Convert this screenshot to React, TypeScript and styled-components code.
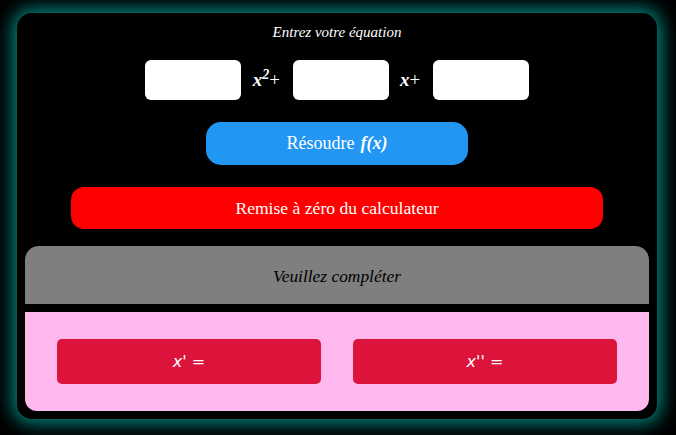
import React from "react";
import styled, { createGlobalStyle } from "styled-components";

const Global = createGlobalStyle`
  html, body { margin: 0; padding: 0; background: #000; }
  body { font-family: "Liberation Serif", "Times New Roman", serif; }
  * { box-sizing: border-box; }
`;

const serif = `"Liberation Serif", "Times New Roman", serif`;

const Page = styled.div`
  padding: 13px 19px 16px 17px;
  display: flex;
  justify-content: center;
`;

const Card = styled.div`
  width: 640px;
  height: 406px;
  background: #000;
  border-radius: 15px;
  box-shadow: 0 0 18px 4px rgba(0, 175, 165, 0.8);
  padding: 10px 8px 8px;
  display: flex;
  flex-direction: column;
  align-items: center;
`;

const Title = styled.div`
  color: #fff;
  font-family: ${serif};
  font-style: italic;
  font-size: 15px;
  line-height: 18px;
  height: 18px;
`;

const EquationRow = styled.div`
  margin-top: 19px;
  display: flex;
  align-items: center;
  height: 40px;
`;

const CoefInput = styled.input`
  width: 96px;
  height: 40px;
  border: none;
  border-radius: 6px;
  background: #fff;
  outline: none;
  padding: 0 8px;
`;

const Term = styled.span<{ $l: number; $r: number }>`
  color: #fff;
  font-family: ${serif};
  font-size: 19px;
  margin: 0 ${(p) => p.$r}px 0 ${(p) => p.$l}px;
  white-space: nowrap;
`;

const Var = styled.b`
  font-style: italic;
`;

const Sup = styled.sup`
  font-size: 14px;
  font-weight: bold;
  font-style: italic;
  vertical-align: 7px;
  line-height: 0;
`;

const SolveButton = styled.button`
  margin-top: 22px;
  width: 262px;
  height: 43px;
  border: none;
  border-radius: 15px;
  background: #2196f3;
  color: #fff;
  font-family: ${serif};
  font-size: 18px;
  display: flex;
  align-items: center;
  justify-content: center;
  gap: 6px;
`;

const FnLabel = styled.b`
  font-style: italic;
`;

const ResetButton = styled.button`
  margin-top: 22px;
  width: 532px;
  height: 42px;
  border: none;
  border-radius: 13px;
  background: #ff0000;
  color: #fff;
  font-family: ${serif};
  font-size: 17.6px;
`;

const Status = styled.div`
  margin-top: 17px;
  width: 624px;
  height: 58px;
  padding-top: 2px;
  background: #7f7f7f;
  border-radius: 14px 14px 0 0;
  display: flex;
  align-items: center;
  justify-content: center;
  font-family: ${serif};
  font-style: italic;
  font-size: 17.4px;
  color: #000;
`;

const Results = styled.div`
  margin-top: 8px;
  width: 624px;
  height: 99px;
  background: #ffb8ee;
  border-radius: 0 0 12px 12px;
  padding: 27px 32px;
  display: grid;
  grid-template-columns: 1fr 1fr;
  column-gap: 32px;
`;

const Root = styled.div`
  background: #dc143c;
  border-radius: 5px;
  height: 45px;
  display: flex;
  align-items: center;
  justify-content: center;
  color: #fff;
  font-family: "DejaVu Sans", sans-serif;
  font-size: 16px;
`;

const RootVar = styled.i``;

export default function App() {
  return (
    <>
      <Global />
      <Page>
        <Card>
          <Title>Entrez votre équation</Title>
          <EquationRow>
            <CoefInput type="text" />
            <Term $l={12} $r={13}>
              <Var>x</Var>
              <Sup>2</Sup>+
            </Term>
            <CoefInput type="text" />
            <Term $l={11} $r={13}>
              <Var>x</Var>+
            </Term>
            <CoefInput type="text" />
          </EquationRow>
          <SolveButton>
            Résoudre <FnLabel>f(x)</FnLabel>
          </SolveButton>
          <ResetButton>Remise à zéro du calculateur</ResetButton>
          <Status>Veuillez compléter</Status>
          <Results>
            <Root>
              <RootVar>x'</RootVar>&nbsp;=
            </Root>
            <Root>
              <RootVar>x''</RootVar>&nbsp;=
            </Root>
          </Results>
        </Card>
      </Page>
    </>
  );
}
